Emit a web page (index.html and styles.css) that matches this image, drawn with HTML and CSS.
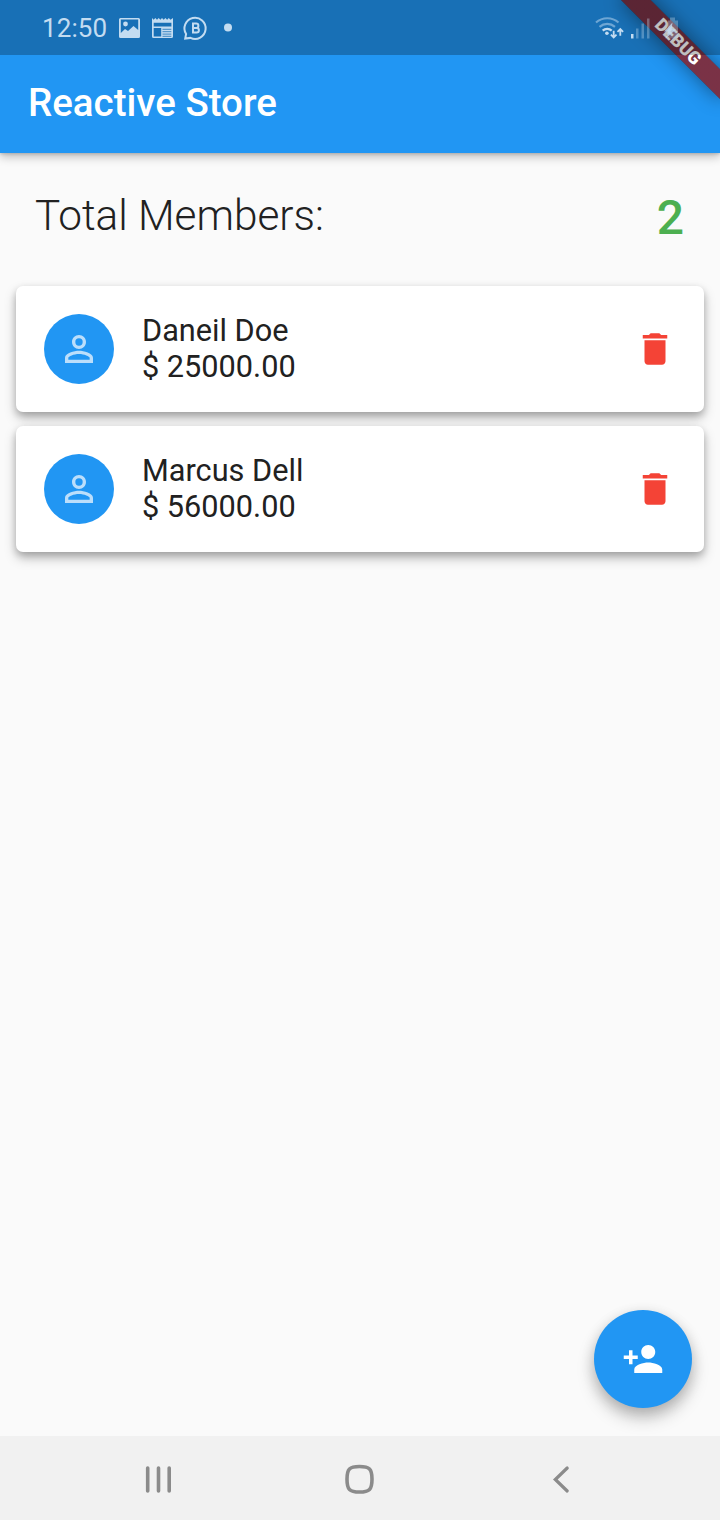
FILE: index.html
```html
<!DOCTYPE html>
<html lang="en">
<head>
<meta charset="utf-8">
<title>Reactive Store</title>
<link rel="stylesheet" href="styles.css">
</head>
<body>
<div class="screen">
  <header class="app-bar"><h1 class="app-title">Reactive Store</h1></header>
  <main class="content">
    <section class="summary">
      <span class="summary-label">Total Members:</span>
      <span class="summary-count">2</span>
    </section>
    <ul class="members">
      <li class="card">
        <span class="avatar"><svg class="icon" viewBox="0 0 24 24"><path d="M12 5.9a2.1 2.1 0 1 1 0 4.2 2.1 2.1 0 0 1 0-4.2m0 9c2.97 0 6.1 1.46 6.1 2.1v1.1H5.9V17c0-.64 3.13-2.1 6.1-2.1M12 4C9.79 4 8 5.79 8 8s1.79 4 4 4 4-1.79 4-4-1.79-4-4-4zm0 9c-2.67 0-8 1.34-8 4v3h16v-3c0-2.66-5.33-4-8-4z"/></svg></span>
        <div class="member"><div class="name">Daneil Doe</div><div class="salary">$ 25000.00</div></div>
        <svg class="icon delete" viewBox="0 0 24 24"><path d="M6 19c0 1.1.9 2 2 2h8c1.1 0 2-.9 2-2V7H6v12zM19 4h-3.5l-1-1h-5l-1 1H5v2h14V4z"/></svg>
      </li>
      <li class="card">
        <span class="avatar"><svg class="icon" viewBox="0 0 24 24"><path d="M12 5.9a2.1 2.1 0 1 1 0 4.2 2.1 2.1 0 0 1 0-4.2m0 9c2.97 0 6.1 1.46 6.1 2.1v1.1H5.9V17c0-.64 3.13-2.1 6.1-2.1M12 4C9.79 4 8 5.79 8 8s1.79 4 4 4 4-1.79 4-4-1.79-4-4-4zm0 9c-2.67 0-8 1.34-8 4v3h16v-3c0-2.66-5.33-4-8-4z"/></svg></span>
        <div class="member"><div class="name">Marcus Dell</div><div class="salary">$ 56000.00</div></div>
        <svg class="icon delete" viewBox="0 0 24 24"><path d="M6 19c0 1.1.9 2 2 2h8c1.1 0 2-.9 2-2V7H6v12zM19 4h-3.5l-1-1h-5l-1 1H5v2h14V4z"/></svg>
      </li>
    </ul>
  </main>
  <nav class="nav-bar">
    <svg class="nav-icon" viewBox="0 0 36 36"><path d="M5.700 7v23M16.500 7v23M27.200 7v23"/></svg>
    <svg class="nav-icon" viewBox="0 0 36 36"><path d="M17.500 5.500C27.500 5.500 30 8 30 18.200S27.500 31 17.500 31 5 28.500 5 18.200 7.500 5.500 17.500 5.500z"/></svg>
    <svg class="nav-icon" viewBox="0 0 36 36"><path class="chevron" d="M25.200 7L13.300 18.500 25.200 30"/></svg>
  </nav>

  <div class="debug-corner"><div class="debug-banner">DEBUG</div></div>

  <div class="status-bar">
    <span class="clock">12:50</span>
    <svg class="status-left" width="116" height="28" viewBox="0 0 116 28">
      <path fill-rule="evenodd" d="M2.500 4h18a1.500 1.500 0 0 1 1.500 1.500v17a1.500 1.500 0 0 1-1.500 1.500h-18A1.500 1.500 0 0 1 1 22.500v-17A1.500 1.500 0 0 1 2.500 4zM2.800 5.600V19L7 15l3 2 5.500-5 4.700 4V5.600zM7.500 7.600a2.400 2.400 0 1 1 0 4.800 2.400 2.400 0 0 1 0-4.800z"/>
      <path fill-rule="evenodd" d="M34 4l1.700 1.800L37.300 4 39 5.800 40.700 4l1.700 1.800L44 4l1.700 1.800L47.400 4l1.700 1.800L50.800 4l1.700 1.800L55 4v18.500a1.500 1.500 0 0 1-1.500 1.500h-18a1.500 1.500 0 0 1-1.500-1.500zM35.700 8.800v3.700h17.700V8.800zM35.700 14v8.400h7.500V14z"/>
      <path class="cut" d="M44.500 15.300h8.800M44.500 17.700h8.800M44.500 20.100h8.800M44.500 22.300h8.800"/>
      <path class="line" d="M67.200 24.600l.9-4.600A10.600 10.600 0 1 1 72.500 23.900z"/>
      <path class="line" d="M75 9.500h3.200a2.100 2.100 0 0 1 0 4.400H75zm0 4.400h3.600a2.300 2.300 0 0 1 0 4.600H75z"/>
      <circle cx="110" cy="13.500" r="4"/>
    </svg>
    <svg class="status-right" width="90" height="40" viewBox="0 0 90 40">
      <path class="wifi-dim" d="M1 14.500a17 17 0 0 1 22.500 0M4.500 18.800a12 12 0 0 1 15.500 0"/>
      <path class="wifi" d="M7.700 22.600a6.500 6.500 0 0 1 9 0"/>
      <circle cx="11.900" cy="25.200" r="1.800"/>
      <path class="arrows" d="M18.700 22.700v6.500M15.900 26.600l2.800 2.800 2.800-2.800M25.300 27.800v-6.500M22.500 23.800l2.800-2.800 2.800 2.800"/>
      <path d="M36 26h2.500v4.500H36z"/>
      <path class="dim" d="M41 20.500h2.500v10H41zM46.500 15.500H49v15h-2.500zM52 10.500h2.500v20H52z"/>
      <path class="dim" d="M73 12.500h2v-3h5v3h3v18H73z"/>
      <path class="bolt" d="M77.500 14.500l-8.500 9h4l-2.500 7 10.500-9h-4.500z"/>
    </svg>
  </div>
  <button class="fab" aria-label="Add member"><svg class="icon" viewBox="0 0 24 24"><path d="M15 12c2.210 0 4-1.790 4-4s-1.790-4-4-4-4 1.790-4 4 1.790 4 4 4zm-9-2V7H4v3H1v2h3v3h2v-3h3v-2H6zm9 4c-2.670 0-8 1.340-8 4v2h16v-2c0-2.660-5.330-4-8-4z"/></svg></button>
</div>
</body>
</html>
```
FILE: styles.css
```css
* { box-sizing: border-box; }
body { margin: 0; font-family: Roboto, "Liberation Sans", sans-serif; color: #212121; }
.screen { position: relative; width: 720px; height: 1520px; display: flex; flex-direction: column; overflow: hidden; background: #fafafa; }
.app-bar { height: 153px; flex: none; padding: 55px 28px 2px; display: flex; align-items: center; background: #2196f3; box-shadow: 0 4px 9px rgba(0,0,0,.24), 0 1px 3px rgba(0,0,0,.16); }
.app-title { margin: 0; font-size: 38.500px; line-height: 46px; font-weight: 500; color: #fff; }
.content { flex: 1; padding: 28px 16px 0; }
.summary { display: flex; justify-content: space-between; align-items: center; height: 70px; padding: 0 20px 0 19px; margin-bottom: 35px; }
.summary-label { font-size: 42.300px; font-weight: 300; line-height: 50px; }
.summary-count { font-size: 48px; line-height: 56px; font-weight: 500; color: #4caf50; margin-top: 3px; }
.members { list-style: none; margin: 0; padding: 0; display: flex; flex-direction: column; gap: 14px; }
.card { height: 126px; padding: 0 28px; display: flex; align-items: center; background: #fff; border-radius: 7px; box-shadow: 0 6px 12px rgba(0,0,0,.26), 0 3px 7px rgba(0,0,0,.16); }
.avatar { width: 70px; height: 70px; border-radius: 50%; background: #2196f3; display: grid; place-items: center; fill: #bbdefb; }
.icon { width: 42px; height: 42px; display: block; }
.member { flex: 1; margin-left: 28px; font-size: 30.700px; line-height: 36px; }
.delete { fill: #f44336; }
.nav-bar { height: 84px; flex: none; background: #f1f1f1; display: flex; align-items: center; justify-content: space-between; padding: 2px 142px 0 142px; }
.nav-icon { width: 36px; height: 36px; fill: none; stroke: #8b8b8b; stroke-width: 3.600; stroke-linecap: round; }
.chevron { stroke-width: 3.200; }
.fab { position: absolute; right: 28px; bottom: 112px; width: 98px; height: 98px; padding: 0; border: 0; border-radius: 50%; background: #2196f3; fill: #fff; display: grid; place-items: center; box-shadow: 0 10px 17px rgba(0,0,0,.22), 0 4px 14px rgba(0,0,0,.14); }
.debug-corner { position: absolute; top: 0; right: 0; width: 180px; height: 180px; overflow: hidden; }
.debug-banner { position: absolute; left: 110px; top: 49px; width: 140px; height: 21px; transform-origin: 70px -49px; transform: rotate(45deg); background: linear-gradient(rgba(183,28,28,.627), rgba(183,28,28,.627)), rgba(0,0,0,.42); box-shadow: 0 0 20px rgba(0,0,0,.45); color: #fff; font-size: 17.850px; line-height: 20px; font-weight: 900; text-align: center; }
.status-bar { position: absolute; top: 0; left: 0; width: 720px; height: 55px; display: flex; align-items: center; padding: 0 36px 0 42px; background: rgba(0,0,0,.25); fill: #c3dcf1; }
.clock { width: 76px; font-size: 26px; line-height: 32px; color: #c3dcf1; letter-spacing: .1px; margin-top: 1px; }
.status-left { margin-right: auto; }
.status-right { margin-right: -1px; }
.line { fill: none; stroke: #c3dcf1; stroke-width: 2; }
.cut { stroke: #1a71b7; stroke-width: .8; }
.wifi, .wifi-dim, .arrows { fill: none; stroke: #c3dcf1; stroke-width: 2.200; }
.wifi-dim { opacity: .5; }
.dim { opacity: .35; }
.bolt { opacity: .8; }
.arrows { stroke-width: 1.800; }
```
